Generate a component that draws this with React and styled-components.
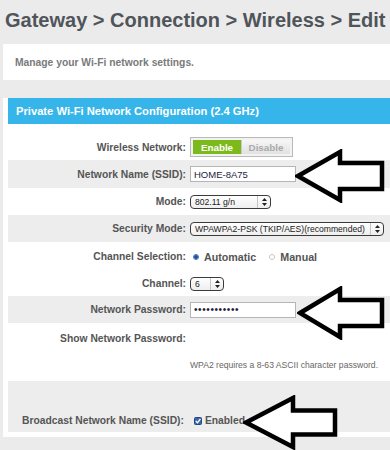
import React from "react";
import styled, { createGlobalStyle } from "styled-components";

const GlobalStyle = createGlobalStyle`
  html, body {
    margin: 0;
    padding: 0;
    background: #ebebeb;
  }
  body {
    font-family: "Liberation Sans", Arial, sans-serif;
    overflow: hidden;
  }
`;

const Arrow = ({ x, y, head, shaft, headH, shaftH }) => {
  const p = 3;
  const c = headH / 2;
  const w = head + shaft;
  const pts = [
    [0, c],
    [head, 0],
    [head, c - shaftH / 2],
    [w, c - shaftH / 2],
    [w, c + shaftH / 2],
    [head, c + shaftH / 2],
    [head, headH],
  ]
    .map(([a, b]) => `${a + p},${b + p}`)
    .join(" ");
  return (
    <ArrowSvg $x={x - p} $y={y - c - p} width={w + p * 2} height={headH + p * 2}>
      <polygon points={pts} fill="#fff" stroke="#000" strokeWidth="4.5" strokeLinejoin="miter" />
    </ArrowSvg>
  );
};

const SelectBox = ({ w, children }) => (
  <Select $w={w}>
    <SelectValue>{children}</SelectValue>
    <Spinner>
      <svg width="5" height="8" viewBox="0 0 5 8">
        <path d="M2.5 0 L5 3 L0 3 Z M2.5 8 L5 5 L0 5 Z" fill="#222" />
      </svg>
    </Spinner>
  </Select>
);

const App = () => {
  return (
    <Page>
      <GlobalStyle />
      <Title>Gateway &gt; Connection &gt; Wireless &gt; Edit</Title>
      <Intro>Manage your Wi-Fi network settings.</Intro>
      <Panel>
        <Header>Private Wi-Fi Network Configuration (2.4 GHz)</Header>
        <Form>
          <Row $h={26}>
            <Label>Wireless Network:</Label>
            <Toggle>
              <ToggleOption $on>Enable</ToggleOption>
              <ToggleOption>Disable</ToggleOption>
            </Toggle>
          </Row>
          <Row $h={28} $shade>
            <Label>Network Name (SSID):</Label>
            <TextInput>HOME-8A75</TextInput>
          </Row>
          <Row $h={27}>
            <Label>Mode:</Label>
            <SelectBox w={81}>802.11 g/n</SelectBox>
          </Row>
          <Row $h={27} $shade>
            <Label>Security Mode:</Label>
            <SelectBox w={194}>WPAWPA2-PSK (TKIP/AES)(recommended)</SelectBox>
          </Row>
          <Row $h={29}>
            <Label>Channel Selection:</Label>
            <Radios>
              <Radio $checked />
              <RadioText>Automatic</RadioText>
              <Radio />
              <RadioText>Manual</RadioText>
            </Radios>
          </Row>
          <Row $h={25}>
            <Label>Channel:</Label>
            <SelectBox w={34}>6</SelectBox>
          </Row>
          <Row $h={27} $shade>
            <Label>Network Password:</Label>
            <TextInput $dots>•••••••••••</TextInput>
          </Row>
          <Row $h={31}>
            <Label>Show Network Password:</Label>
            <span />
          </Row>
          <Row $h={21}>
            <span />
            <Note>WPA2 requires a 8-63 ASCII character password.</Note>
          </Row>
          <BroadcastRow>
            <Label>Broadcast Network Name (SSID):</Label>
            <Check>
              <svg width="8" height="8" viewBox="0 0 8 8">
                <rect x="0.5" y="0.5" width="7" height="7" rx="1" fill="#3a68ad" stroke="#24477e" />
                <path d="M1.8 4 L3.4 5.8 L6.4 2" fill="none" stroke="#fff" strokeWidth="1.3" />
              </svg>
              <CheckText>Enabled</CheckText>
            </Check>
          </BroadcastRow>
        </Form>
      </Panel>
      <Arrow x={298} y={176} head={42} shaft={42} headH={48} shaftH={26} />
      <Arrow x={300} y={313} head={40} shaft={42} headH={48} shaftH={26} />
      <Arrow x={246} y={422} head={47} shaft={42} headH={49} shaftH={24} />
    </Page>
  );
};

export default App;

const Page = styled.div`
  position: relative;
  width: 390px;
  height: 450px;
  overflow: hidden;
`;

const Title = styled.h1`
  margin: 0;
  padding: 8px 0 0 5px;
  font-size: 20px;
  line-height: 24px;
  font-weight: 700;
  color: #50555a;
  white-space: nowrap;
`;

const Intro = styled.div`
  margin: 12px 0 0 3px;
  height: 36px;
  padding-left: 12px;
  display: flex;
  align-items: center;
  background: #fff;
  font-size: 10.3px;
  font-weight: 700;
  color: #7a7a7a;
`;

const Panel = styled.div`
  margin: 18px 0 0 3px;
  padding: 0 0 5px 5px;
  background: #fff;
`;

const Header = styled.div`
  height: 26px;
  padding-left: 8px;
  display: flex;
  align-items: center;
  background: #35b5ea;
  color: #fff;
  font-size: 11.2px;
  font-weight: 700;
`;

const Form = styled.div`
  padding-top: 10px;
  display: flex;
  flex-direction: column;
`;

const Row = styled.div`
  display: grid;
  grid-template-columns: 178px 1fr;
  column-gap: 4px;
  align-items: center;
  height: ${({ $h }) => $h}px;
  background: ${({ $shade }) => ($shade ? "#ededed" : "transparent")};
`;

const Label = styled.div`
  text-align: right;
  font-size: 10.3px;
  font-weight: 700;
  color: #555;
  white-space: nowrap;
`;

const Toggle = styled.div`
  display: flex;
  width: 103px;
  height: 20px;
  box-sizing: border-box;
  padding: 2px;
  border: 1px solid #b9b9b9;
  background: #f2f2f2;
`;

const ToggleOption = styled.div`
  flex: 1;
  display: flex;
  align-items: center;
  justify-content: center;
  font-size: 9.8px;
  font-weight: 700;
  color: ${({ $on }) => ($on ? "#fff" : "#a9a9a9")};
  background: ${({ $on }) => ($on ? "#7cba1c" : "linear-gradient(#f7f7f7, #e1e1e1)")};
  border-left: ${({ $on }) => ($on ? "none" : "1px solid #c9c9c9")};
`;

const TextInput = styled.div`
  width: 106px;
  height: 16px;
  box-sizing: border-box;
  padding-left: 3px;
  display: flex;
  align-items: center;
  background: #fff;
  border: 1px solid #b5b5b5;
  font-size: ${({ $dots }) => ($dots ? "10px" : "9.5px")};
  letter-spacing: ${({ $dots }) => ($dots ? "0.6px" : "0")};
  color: #1d1d3a;
`;

const Select = styled.div`
  display: flex;
  align-items: center;
  width: ${({ $w }) => $w}px;
  height: 14px;
  box-sizing: border-box;
  border: 1px solid #3b3b3b;
  border-radius: 4px;
  background: linear-gradient(#ffffff, #eeeeee);
`;

const SelectValue = styled.span`
  flex: 1;
  padding-left: 4px;
  font-size: 8.6px;
  color: #222;
  white-space: nowrap;
  overflow: hidden;
`;

const Spinner = styled.span`
  width: 12px;
  height: 100%;
  display: flex;
  align-items: center;
  justify-content: center;
  border-left: 1px solid #c4c4c4;
`;

const Radios = styled.div`
  display: flex;
  align-items: center;
`;

const Radio = styled.span`
  width: 6px;
  height: 6px;
  margin: 0 5px 0 ${({ $checked }) => ($checked ? "3px" : "13px")};
  border-radius: 50%;
  box-sizing: border-box;
  border: 1px solid ${({ $checked }) => ($checked ? "#3d6fb8" : "#c9c9c9")};
  background: ${({ $checked }) =>
    $checked ? "radial-gradient(circle, #1f4f9a 0 1.5px, #9cc0ea 2px)" : "#fff"};
`;

const RadioText = styled.span`
  font-size: 10.7px;
  font-weight: 700;
  color: #555;
`;

const Note = styled.div`
  font-size: 8.6px;
  color: #666;
  white-space: nowrap;
`;

const BroadcastRow = styled.div`
  margin-top: 6px;
  height: 51px;
  box-sizing: border-box;
  padding: 0 0 6px 14px;
  display: flex;
  align-items: flex-end;
  gap: 10px;
  background: #ededed;
`;

const Check = styled.div`
  display: flex;
  align-items: center;
  gap: 3px;
`;

const CheckText = styled.span`
  font-size: 10.3px;
  font-weight: 700;
  color: #555;
`;

const ArrowSvg = styled.svg`
  position: absolute;
  left: ${({ $x }) => $x}px;
  top: ${({ $y }) => $y}px;
`;
